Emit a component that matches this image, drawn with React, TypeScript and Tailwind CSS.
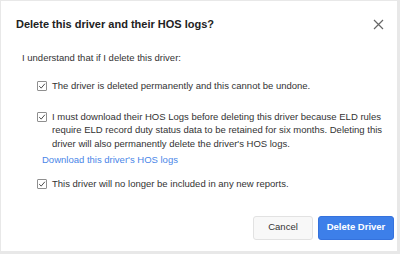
import { useState } from "react";

/* ── Checkbox row ─────────────────────────────────────────────────────── */
function CheckRow({ checked, onChange, children }: { checked: boolean; onChange: (v: boolean) => void; children: React.ReactNode }) {
  return (
    <label className="flex items-start gap-[5px] pl-[15px] cursor-pointer">
      <span
        role="checkbox"
        aria-checked={checked}
        onClick={() => onChange(!checked)}
        className="mt-[2px] w-[10px] h-[10px] flex-shrink-0 flex items-center justify-center border border-[#8f8f8f] rounded-[1px] bg-white"
      >
        {checked && (
          <svg viewBox="0 0 10 10" className="w-[8px] h-[8px]">
            <path d="M1.5 5.2 L4 7.6 L8.6 2.2" fill="none" stroke="#444" strokeWidth="1.2" />
          </svg>
        )}
      </span>
      <span className="text-[9.5px] leading-[13.5px] text-[#333]">{children}</span>
    </label>
  );
}

export default function App() {
  const [a, setA] = useState(true);
  const [b, setB] = useState(true);
  const [c, setC] = useState(true);

  return (
    <div
      className="w-[400px] h-[254px] bg-white border-t border-l border-r-[3px] border-b-[3px] border-[#e8e8e8] flex flex-col"
      style={{ fontFamily: '"Liberation Sans", Arial, sans-serif' }}
    >
      {/* Header */}
      <div className="flex items-center justify-between pt-[16px] pl-[15px] pr-[13px]">
        <h1 className="text-[11px] leading-[14px] font-bold text-[#222]">Delete this driver and their HOS logs?</h1>
        <button className="w-[11px] h-[11px] flex items-center justify-center">
          <svg viewBox="0 0 11 11" className="w-[11px] h-[11px]">
            <path d="M1 1 L10 10 M10 1 L1 10" stroke="#666" strokeWidth="1.2" />
          </svg>
        </button>
      </div>

      {/* Body */}
      <div className="pl-[21px] pr-[6px] pt-[20px]">
        <p className="text-[9.5px] leading-[14px] text-[#333]">I understand that if I delete this driver:</p>

        <div className="mt-[14px]">
          <CheckRow checked={a} onChange={setA}>The driver is deleted permanently and this cannot be undone.</CheckRow>
        </div>

        <div className="mt-[17px]">
          <CheckRow checked={b} onChange={setB}>
            I must download their HOS Logs before deleting this driver because ELD rules require ELD record duty status data to be retained for six months. Deleting this driver will also permanently delete the driver's HOS logs.
          </CheckRow>
        </div>

        <a href="#" className="block ml-[20px] mt-[3px] text-[9.5px] leading-[14px] text-[#4a86e8]">Download this driver's HOS logs</a>

        <div className="mt-[10px]">
          <CheckRow checked={c} onChange={setC}>This driver will no longer be included in any new reports.</CheckRow>
        </div>
      </div>

      {/* Footer */}
      <div className="flex justify-end gap-[5px] pr-[3px] mt-[25px]">
        <button className="w-[60px] h-[24px] rounded-[3px] border border-[#e2e2e2] bg-[#f8f8f8] text-[9.5px] text-[#333]">Cancel</button>
        <button className="w-[76px] h-[24px] rounded-[3px] border border-[#3572dd] bg-[#3d7fe9] text-[9.5px] font-bold text-white">Delete Driver</button>
      </div>
    </div>
  );
}
